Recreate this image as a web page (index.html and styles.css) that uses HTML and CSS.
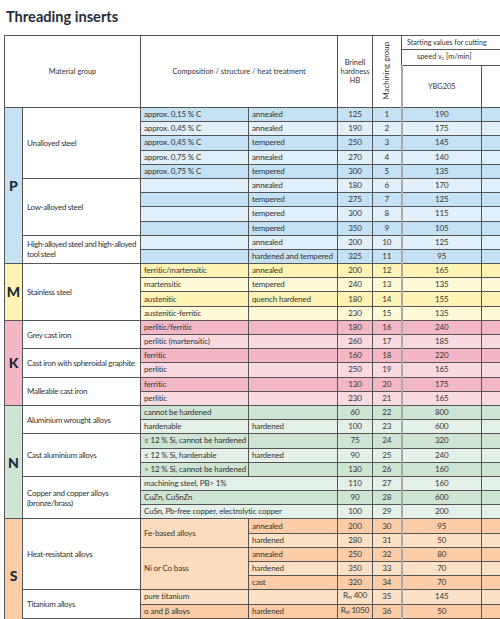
FILE: index.html
```html
<!DOCTYPE html>
<html lang="en">
<head>
    <meta charset="UTF-8">
    <title>Threading inserts</title>
    <link rel="stylesheet" href="styles.css">
</head>
<body>
    <h1 class="title">Threading inserts</h1>

    <table class="grid">
        <colgroup>
            <col class="c-letter">
            <col class="c-material">
            <col class="c-comp">
            <col class="c-heat">
            <col class="c-hb">
            <col class="c-mg">
            <col class="c-speed">
            <col class="c-next">
        </colgroup>
        <thead>
            <tr class="h1">
                <th colspan="2" rowspan="3">Material group</th>
                <th colspan="2" rowspan="3">Composition / structure / heat treatment</th>
                <th rowspan="3" class="hb">Brinell<br>hardness<br>HB</th>
                <th rowspan="3" class="mg"><span>Machining group</span></th>
                <th colspan="2" class="start">Starting values for cutting</th>
            </tr>
            <tr class="h2">
                <th colspan="2" class="unit">speed v<sub>c</sub> [m/min]</th>
            </tr>
            <tr class="h3">
                <th class="speed">YBG205</th>
                <th></th>
            </tr>
        </thead>
        <tbody class="p">
            <tr class="d">
                <td rowspan="11" class="letter">P</td>
                <td rowspan="5" class="mat">Unalloyed steel</td>
                <td>approx. 0,15 % C</td><td>annealed</td><td class="n">125</td><td class="n">1</td><td class="n speed">190</td><td></td>
            </tr>
            <tr class="l"><td>approx. 0,45 % C</td><td>annealed</td><td class="n">190</td><td class="n">2</td><td class="n speed">175</td><td></td></tr>
            <tr class="d"><td>approx. 0,45 % C</td><td>tempered</td><td class="n">250</td><td class="n">3</td><td class="n speed">145</td><td></td></tr>
            <tr class="l"><td>approx. 0,75 % C</td><td>annealed</td><td class="n">270</td><td class="n">4</td><td class="n speed">140</td><td></td></tr>
            <tr class="d"><td>approx. 0,75 % C</td><td>tempered</td><td class="n">300</td><td class="n">5</td><td class="n speed">135</td><td></td></tr>
            <tr class="l">
                <td rowspan="4" class="mat">Low-alloyed steel</td>
                <td></td><td>annealed</td><td class="n">180</td><td class="n">6</td><td class="n speed">170</td><td></td>
            </tr>
            <tr class="d"><td></td><td>tempered</td><td class="n">275</td><td class="n">7</td><td class="n speed">125</td><td></td></tr>
            <tr class="l"><td></td><td>tempered</td><td class="n">300</td><td class="n">8</td><td class="n speed">115</td><td></td></tr>
            <tr class="d"><td></td><td>tempered</td><td class="n">350</td><td class="n">9</td><td class="n speed">105</td><td></td></tr>
            <tr class="l">
                <td rowspan="2" class="mat tight">High-alloyed steel and high-alloyed<br>tool steel</td>
                <td></td><td>annealed</td><td class="n">200</td><td class="n">10</td><td class="n speed">125</td><td></td>
            </tr>
            <tr class="d"><td></td><td>hardened and tempered</td><td class="n">325</td><td class="n">11</td><td class="n speed">95</td><td></td></tr>
        </tbody>
        <tbody class="m">
            <tr class="d">
                <td rowspan="4" class="letter">M</td>
                <td rowspan="4" class="mat">Stainless steel</td>
                <td>ferritic/martensitic</td><td>annealed</td><td class="n">200</td><td class="n">12</td><td class="n speed">165</td><td></td>
            </tr>
            <tr class="l"><td>martensitic</td><td>tempered</td><td class="n">240</td><td class="n">13</td><td class="n speed">135</td><td></td></tr>
            <tr class="d"><td>austenitic</td><td>quench hardened</td><td class="n">180</td><td class="n">14</td><td class="n speed">155</td><td></td></tr>
            <tr class="l"><td>austenitic-ferritic</td><td></td><td class="n">230</td><td class="n">15</td><td class="n speed">135</td><td></td></tr>
        </tbody>
        <tbody class="k">
            <tr class="d">
                <td rowspan="6" class="letter">K</td>
                <td rowspan="2" class="mat">Grey cast iron</td>
                <td>perlitic/ferritic</td><td></td><td class="n">180</td><td class="n">16</td><td class="n speed">240</td><td></td>
            </tr>
            <tr class="l"><td>perlitic (martensitic)</td><td></td><td class="n">260</td><td class="n">17</td><td class="n speed">185</td><td></td></tr>
            <tr class="d">
                <td rowspan="2" class="mat">Cast iron with spheroidal graphite</td>
                <td>ferritic</td><td></td><td class="n">160</td><td class="n">18</td><td class="n speed">220</td><td></td>
            </tr>
            <tr class="l"><td>perlitic</td><td></td><td class="n">250</td><td class="n">19</td><td class="n speed">165</td><td></td></tr>
            <tr class="d">
                <td rowspan="2" class="mat">Malleable cast iron</td>
                <td>ferritic</td><td></td><td class="n">130</td><td class="n">20</td><td class="n speed">175</td><td></td>
            </tr>
            <tr class="l"><td>perlitic</td><td></td><td class="n">230</td><td class="n">21</td><td class="n speed">165</td><td></td></tr>
        </tbody>
        <tbody class="nf">
            <tr class="d">
                <td rowspan="8" class="letter">N</td>
                <td rowspan="2" class="mat">Aluminium wrought alloys</td>
                <td>cannot be hardened</td><td></td><td class="n">60</td><td class="n">22</td><td class="n speed">800</td><td></td>
            </tr>
            <tr class="l"><td>hardenable</td><td>hardened</td><td class="n">100</td><td class="n">23</td><td class="n speed">600</td><td></td></tr>
            <tr class="d">
                <td rowspan="3" class="mat">Cast aluminium alloys</td>
                <td>≤ 12 % Si, cannot be hardened</td><td></td><td class="n">75</td><td class="n">24</td><td class="n speed">320</td><td></td>
            </tr>
            <tr class="l"><td>≤ 12 % Si, hardenable</td><td>hardened</td><td class="n">90</td><td class="n">25</td><td class="n speed">240</td><td></td></tr>
            <tr class="d"><td>&gt; 12 % Si, cannot be hardened</td><td></td><td class="n">130</td><td class="n">26</td><td class="n speed">160</td><td></td></tr>
            <tr class="l">
                <td rowspan="3" class="mat">Copper and copper alloys (bronze/brass)</td>
                <td colspan="2">machining steel, PB&gt; 1%</td><td class="n">110</td><td class="n">27</td><td class="n speed">160</td><td></td>
            </tr>
            <tr class="d"><td colspan="2">CuZn, CuSnZn</td><td class="n">90</td><td class="n">28</td><td class="n speed">600</td><td></td></tr>
            <tr class="l"><td colspan="2">CuSn, Pb-free copper, electrolytic copper</td><td class="n">100</td><td class="n">29</td><td class="n speed">200</td><td></td></tr>
        </tbody>
        <tbody class="s">
            <tr class="d">
                <td rowspan="8" class="letter">S</td>
                <td rowspan="5" class="mat">Heat-resistant alloys</td>
                <td rowspan="2" class="merged">Fe-based alloys</td>
                <td>annealed</td><td class="n">200</td><td class="n">30</td><td class="n speed">95</td><td></td>
            </tr>
            <tr class="l"><td>hardened</td><td class="n">280</td><td class="n">31</td><td class="n speed">50</td><td></td></tr>
            <tr class="d">
                <td rowspan="3" class="merged">Ni or Co bass</td>
                <td>annealed</td><td class="n">250</td><td class="n">32</td><td class="n speed">80</td><td></td>
            </tr>
            <tr class="l"><td>hardened</td><td class="n">350</td><td class="n">33</td><td class="n speed">70</td><td></td></tr>
            <tr class="d"><td>cast</td><td class="n">320</td><td class="n">34</td><td class="n speed">70</td><td></td></tr>
            <tr class="l">
                <td rowspan="2" class="mat">Titanium alloys</td>
                <td>pure titanium</td><td></td><td class="n">R<sub>m</sub> 400</td><td class="n">35</td><td class="n speed">145</td><td></td>
            </tr>
            <tr class="d"><td>α and β alloys</td><td>hardened</td><td class="n">R<sub>m</sub> 1050</td><td class="n">36</td><td class="n speed">50</td><td></td></tr>
            <tr class="l">
                <td class="mat"></td>
                <td></td><td></td><td class="n"></td><td class="n"></td><td class="n speed"></td><td></td>
            </tr>
        </tbody>
    </table>
</body>
</html>
```

FILE: styles.css
```css
body {
    margin: 0;
    padding: 0;
    width: 500px;
    height: 619px;
    overflow: hidden;
    background-color: white;
    font-family: Lato, "Open Sans", sans-serif;
    color: #333;
}

.title {
    margin: 0;
    padding: 8px 0 0 6px;
    height: 27px;
    font-size: 14.6px;
    font-weight: bold;
    color: #1f2b38;
    line-height: 17px;
}

.grid {
    margin-left: 4px;
    border-collapse: collapse;
    table-layout: fixed;
    width: 557px;
    font-size: 8px;
    letter-spacing: -0.15px;
}

.c-letter { width: 18px; }
.c-material { width: 118px; }
.c-comp { width: 108px; }
.c-heat { width: 89px; }
.c-hb { width: 35px; }
.c-mg { width: 29px; }
.c-speed { width: 80px; }
.c-next { width: 80px; }

.grid th,
.grid td {
    border: 1px solid #555;
    padding: 0 0 0 3px;
    white-space: nowrap;
    overflow: hidden;
    line-height: 9px;
}

.grid th {
    font-weight: normal;
    font-size: 7.4px;
    letter-spacing: 0;
    text-align: center;
    padding: 0;
    background-color: white;
}

.h1 { height: 14px; }
.h2 { height: 16px; }
.h3 { height: 42px; }

.grid th.start {
    text-align: left;
    padding-left: 5px;
    font-size: 7.1px;
}

.grid th.unit {
    text-align: left;
    padding-left: 15px;
}

.unit sub,
.n sub {
    font-size: 5px;
    vertical-align: -1px;
}

.grid th.hb {
    line-height: 9px;
}

.mg span {
    display: inline-block;
    writing-mode: vertical-rl;
    transform: rotate(180deg);
    font-size: 7.8px;
}

.grid .speed {
    border-left: 2px solid #a9a9a9;
}

.grid tbody tr {
    height: 14.2px;
}

.grid td.n {
    text-align: center;
    padding: 0;
}

.grid td.mat {
    background-color: white;
    white-space: normal;
    padding-left: 4px;
    padding-right: 2px;
    letter-spacing: -0.3px;
    line-height: 10px;
}

.grid td.tight {
    white-space: nowrap;
    padding-right: 0;
    letter-spacing: -0.4px;
}

.grid td.letter {
    text-align: center;
    padding: 0;
    font-size: 14px;
    font-weight: 900;
    letter-spacing: 0;
    color: #1d2a3a;
}

/* group colours */
.p .letter { background-color: #bcdff5; }
.p .d td { background-color: #c5e1f4; }
.p .l td { background-color: #e1f0fa; }

.m .letter { background-color: #fff4b6; }
.m .d td { background-color: #fff3b3; }
.m .l td { background-color: #fff9d8; }

.k .letter { background-color: #f3b5c4; }
.k .d td { background-color: #f4b7c5; }
.k .l td { background-color: #f9dae1; }

.nf .letter { background-color: #cbe5d2; }
.nf .d td { background-color: #cee5d4; }
.nf .l td { background-color: #e4f1e8; }

.s .letter { background-color: #fccfa6; }
.s .d td { background-color: #fccda6; }
.s .l td { background-color: #fde1c6; }
.s td.merged { background-color: #fddcbd; }

.grid tbody td.mat { background-color: white; }
```
